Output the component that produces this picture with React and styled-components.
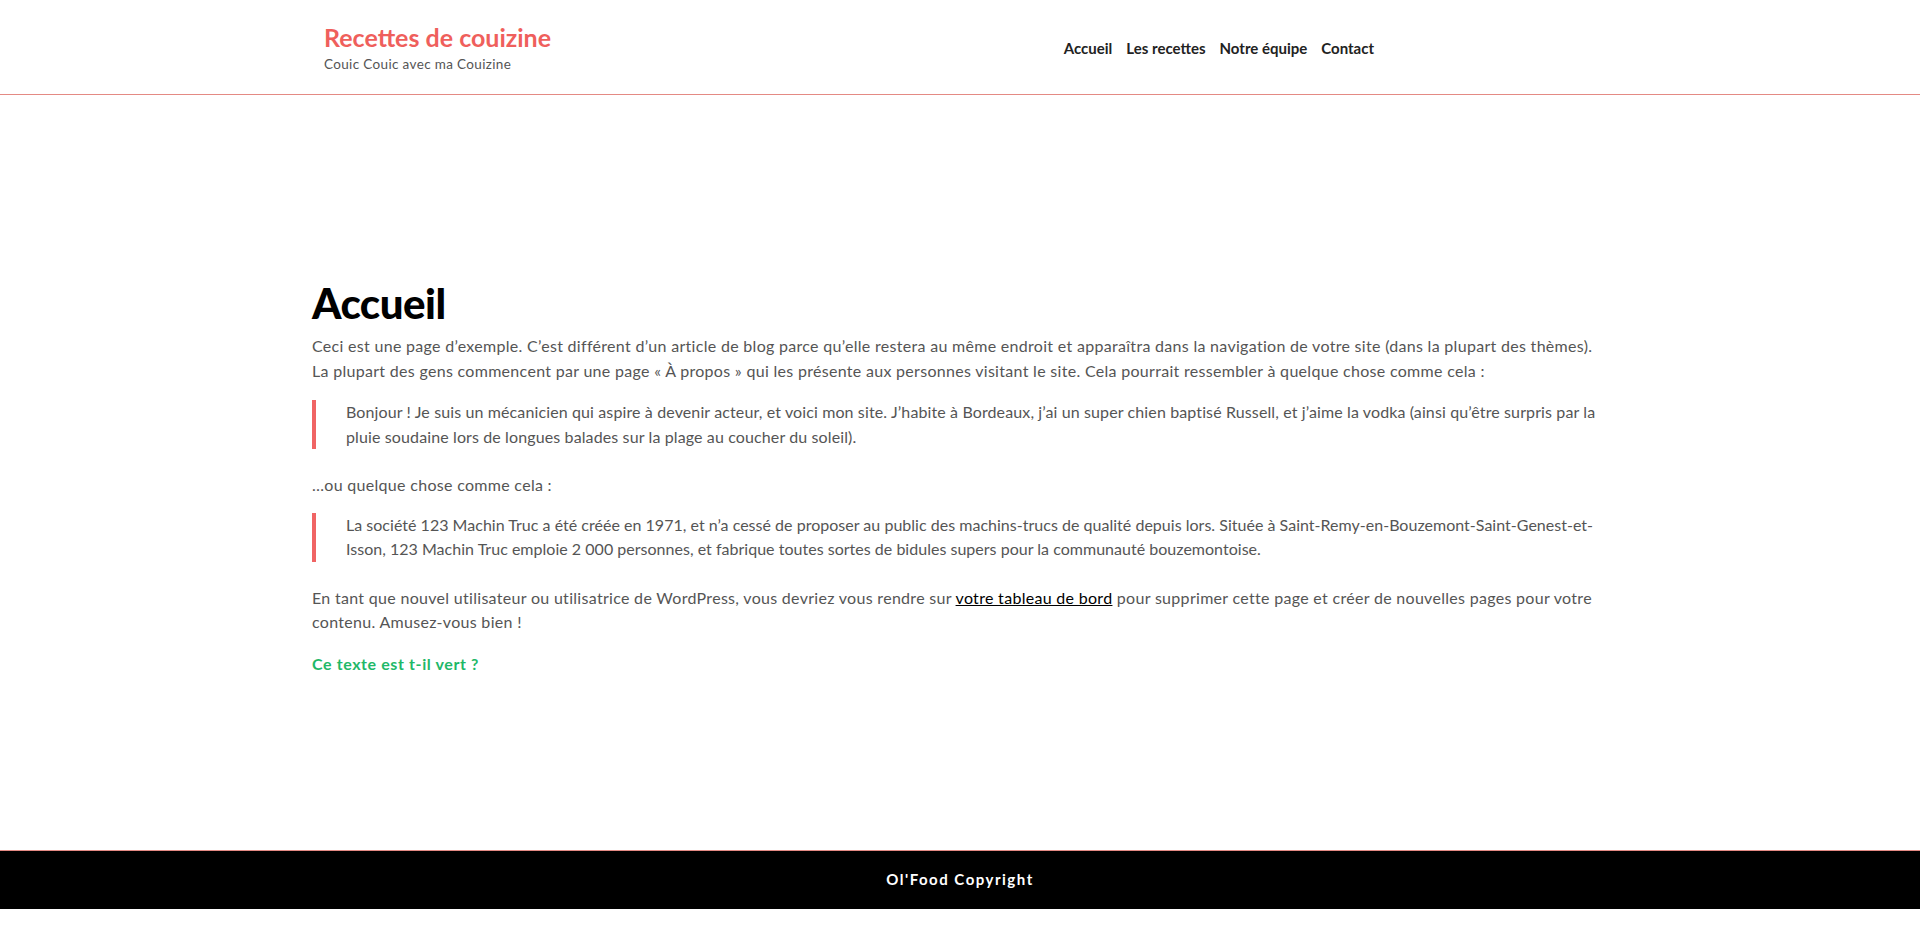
import React from 'react'
import styled, { createGlobalStyle } from 'styled-components'

const GlobalStyle = createGlobalStyle`
    html, body {
        margin: 0;
        padding: 0;
        background: #ffffff;
        font-family: Lato, "Liberation Sans", sans-serif;
    }
`

const Page = styled.div`
    display: flex;
    flex-direction: column;
    min-height: 909px;
`

const Header = styled.header`
    border-bottom: 1px solid #e48a84;
    height: 94px;
`

const HeaderInner = styled.div`
    display: flex;
    justify-content: space-between;
    align-items: center;
    height: 100%;
    padding: 0 546px 0 324px;
    box-sizing: border-box;
`

const Brand = styled.div`
    display: flex;
    flex-direction: column;
    gap: 4px;
`

const SiteTitle = styled.a`
    font-size: 25px;
    font-weight: 700;
    color: #ef5f5c;
    text-decoration: none;
`

const Tagline = styled.span`
    font-size: 13.5px;
    letter-spacing: 0.35px;
    color: #555;
`

const Nav = styled.nav`
    display: flex;
    gap: 14px;
    margin-top: 2px;
`

const NavLink = styled.a`
    font-size: 15px;
    font-weight: 700;
    color: #222;
    text-decoration: none;
`

const Main = styled.main`
    flex: 1;
    padding: 180px 0 0;
`

const Content = styled.article`
    width: 1298px;
    margin: 0 0 0 312px;
    color: #555;
    font-size: 16px;
    letter-spacing: 0.3px;
    line-height: 24.5px;
`

const Title = styled.h1`
    margin: 0 0 3px;
    font-size: 42px;
    line-height: 56px;
    font-weight: 900;
    color: #000;
    letter-spacing: -0.5px;
`

const Paragraph = styled.p`
    margin: 0 0 ${p => p.$gap || 17}px;
`

const Quote = styled.blockquote`
    margin: 0 0 ${p => p.$gap ?? 24}px;
    padding: 0 0 0 30px;
    border-left: 4px solid #f06464;
    letter-spacing: ${p => p.$spacing ?? 0.12}px;
    & p {
        margin: 0;
    }
`

const Link = styled.a`
    color: #000;
    text-decoration: underline;
`

const Green = styled.p`
    margin: 0;
    color: #1fb868;
    font-size: 16px;
    letter-spacing: 0.6px;
    font-weight: 700;
`

const Footer = styled.footer`
    background: #000;
    border-top: 1px solid #e48a84;
    height: 58px;
    display: flex;
    align-items: center;
    justify-content: center;
`

const FooterText = styled.span`
    color: #fff;
    font-size: 15px;
    font-weight: 700;
    letter-spacing: 1.5px;
    margin-top: -3px;
`

const App = () => {
    return (
        <Page>
            <GlobalStyle />
            <Header>
                <HeaderInner>
                    <Brand>
                        <SiteTitle href="#">Recettes de couizine</SiteTitle>
                        <Tagline>Couic Couic avec ma Couizine</Tagline>
                    </Brand>
                    <Nav>
                        <NavLink href="#">Accueil</NavLink>
                        <NavLink href="#">Les recettes</NavLink>
                        <NavLink href="#">Notre équipe</NavLink>
                        <NavLink href="#">Contact</NavLink>
                    </Nav>
                </HeaderInner>
            </Header>
            <Main>
                <Content>
                    <Title>Accueil</Title>
                    <Paragraph>
                        Ceci est une page d’exemple. C’est différent d’un article de blog parce qu’elle restera au même endroit et apparaîtra dans la navigation de votre site (dans la plupart des thèmes). La plupart des gens commencent par une page « À propos » qui les présente aux personnes visitant le site. Cela pourrait ressembler à quelque chose comme cela :
                    </Paragraph>
                    <Quote>
                        <p>Bonjour ! Je suis un mécanicien qui aspire à devenir acteur, et voici mon site. J’habite à Bordeaux, j’ai un super chien baptisé Russell, et j’aime la vodka (ainsi qu’être surpris par la pluie soudaine lors de longues balades sur la plage au coucher du soleil).</p>
                    </Quote>
                    <Paragraph $gap={15}>…ou quelque chose comme cela :</Paragraph>
                    <Quote $spacing={0.02} $gap={24}>
                        <p>La société 123 Machin Truc a été créée en 1971, et n’a cessé de proposer au public des machins-trucs de qualité depuis lors. Située à Saint-Remy-en-Bouzemont-Saint-Genest-et-Isson, 123 Machin Truc emploie 2 000 personnes, et fabrique toutes sortes de bidules supers pour la communauté bouzemontoise.</p>
                    </Quote>
                    <Paragraph $gap={17}>
                        En tant que nouvel utilisateur ou utilisatrice de WordPress, vous devriez vous rendre sur <Link href="#">votre tableau de bord</Link> pour supprimer cette page et créer de nouvelles pages pour votre contenu. Amusez-vous bien !
                    </Paragraph>
                    <Green>Ce texte est t-il vert ?</Green>
                </Content>
            </Main>
            <Footer>
                <FooterText>Ol'Food Copyright</FooterText>
            </Footer>
        </Page>
    )
}

export default App
